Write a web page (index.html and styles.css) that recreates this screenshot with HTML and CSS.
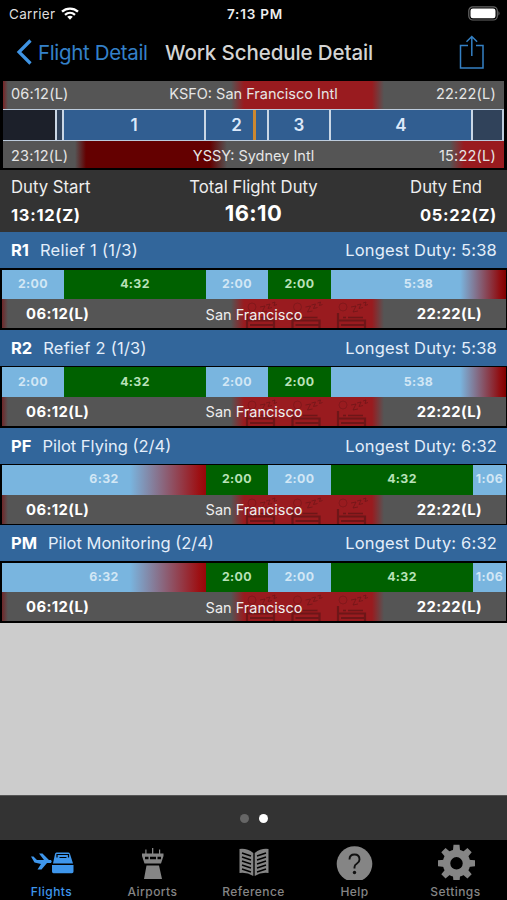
FILE: index.html
```html
<!DOCTYPE html>
<html lang="en">
<head>
<meta charset="utf-8">
<title>Work Schedule Detail</title>
<link rel="stylesheet" href="styles.css">
</head>
<body>
<svg class="defs" width="0" height="0" aria-hidden="true">
  <symbol id="rest" viewBox="0 0 136 29">
    <g id="bed" fill="none" stroke="#5c1416">
      <circle cx="16" cy="8" r="4" stroke-width="1" opacity=".5"/>
      <path d="M11 14V29M11 21.500H38V29M14 26H38" stroke-width="2.200"/>
      <path d="M16 18.500H19M21 18.500H36" stroke-width="1.500"/>
      <path d="M24 8l5-1-3 6 5-1M30 6l4-1-2 4.500 4-1M36 4l3-1-1 3.500 3-1" stroke-width="1" opacity=".75"/>
    </g>
    <use href="#bed" x="45.5"/>
    <use href="#bed" x="91"/>
  </symbol>
</svg>
<main class="screen">
  <header class="top">
    <div class="status">
      <div class="carrier"><span>Carrier</span>
        <svg width="18" height="13" viewBox="0 0 18 13" fill="none" stroke="#fff" stroke-width="2.3"><path d="M1 4.700C5.500.500 12.500.500 17 4.700M4 7.800C7 5.200 11 5.200 14 7.800"/><path d="M6.200 9.800C8 8.500 10 8.500 11.800 9.800L9 12.800Z" fill="#fff" stroke="none"/></svg>
      </div>
      <b class="clock">7:13 PM</b>
      <svg class="battery" width="33" height="15" viewBox="0 0 33 15"><rect x=".8" y=".8" width="28.500" height="13.200" rx="4" fill="none" stroke="#666" stroke-width="1.200"/><rect x="2.500" y="2.500" width="25" height="9.800" rx="2.300" fill="#fff"/><path d="M30.500 5q2 2.400 0 4.800z" fill="#777"/></svg>
    </div>
    <nav class="nav">
      <a class="back"><svg width="17" height="28" viewBox="0 0 17 28"><path d="M15.500 2.500L4 14l11.500 11.500" fill="none" stroke="#3f94e4" stroke-width="3.200"/></svg><span>Flight Detail</span></a>
      <h1>Work Schedule Detail</h1>
      <svg class="share" width="26" height="35" viewBox="0 0 26 35" fill="none" stroke="#3480c4" stroke-width="1.500"><path d="M9 10.500H1.500V33H24V10.500H17M12.800 21V2M7.500 6.800L12.800 1.500l5.300 5.300"/></svg>
    </nav>
  </header>

  <section class="timeline">
    <div class="strip origin"><span class="t-left">06:12(L)</span><span class="airport">KSFO: San Francisco Intl</span><span class="t-right">22:22(L)</span></div>
    <div class="periods"><i class="night"></i><i class="dim"></i><b>1</b><b class="two">2</b><b>3</b><b>4</b><i class="dim"></i></div>
    <div class="strip dest"><span class="t-left">23:12(L)</span><span class="airport">YSSY: Sydney Intl</span><span class="t-right">15:22(L)</span></div>
  </section>

  <section class="summary">
    <div><span>Duty Start</span><b>13:12(Z)</b></div>
    <div class="total"><span>Total Flight Duty</span><b>16:10</b></div>
    <div class="end"><span>Duty End</span><b>05:22(Z)</b></div>
  </section>

  <section class="crew">
    <article>
      <h2><b>R1</b><span class="role relief-role">Relief 1 (1/3)</span><span class="longest">Longest Duty: 5:38</span></h2>
      <div class="bar relief"><i>2:00</i><i class="off">4:32</i><i>2:00</i><i class="off">2:00</i><i class="fade-end">5:38</i></div>
      <div class="place"><svg class="rest"><use href="#rest"/></svg><b>06:12(L)</b><span>San Francisco</span><b>22:22(L)</b></div>
    </article>
    <article>
      <h2><b>R2</b><span class="role relief-role">Refief 2 (1/3)</span><span class="longest">Longest Duty: 5:38</span></h2>
      <div class="bar relief"><i>2:00</i><i class="off">4:32</i><i>2:00</i><i class="off">2:00</i><i class="fade-end">5:38</i></div>
      <div class="place"><svg class="rest"><use href="#rest"/></svg><b>06:12(L)</b><span>San Francisco</span><b>22:22(L)</b></div>
    </article>
    <article>
      <h2><b>PF</b><span class="role">Pilot Flying (2/4)</span><span class="longest">Longest Duty: 6:32</span></h2>
      <div class="bar pilot"><i class="fade">6:32</i><i class="off">2:00</i><i>2:00</i><i class="off">4:32</i><i>1:06</i></div>
      <div class="place"><svg class="rest"><use href="#rest"/></svg><b>06:12(L)</b><span>San Francisco</span><b>22:22(L)</b></div>
    </article>
    <article>
      <h2><b>PM</b><span class="role">Pilot Monitoring (2/4)</span><span class="longest">Longest Duty: 6:32</span></h2>
      <div class="bar pilot"><i class="fade">6:32</i><i class="off">2:00</i><i>2:00</i><i class="off">4:32</i><i>1:06</i></div>
      <div class="place"><svg class="rest"><use href="#rest"/></svg><b>06:12(L)</b><span>San Francisco</span><b>22:22(L)</b></div>
    </article>
  </section>

  <div class="empty"></div>
  <div class="pager"><i></i><i class="on"></i></div>

  <nav class="tabs">
    <a class="active"><svg width="44" height="40" viewBox="0 0 44 40" fill="currentColor"><path d="M1 16.500h2.500L7 20h7l-5-6.500h3.500L19 20h2q1.500 1.500 0 3h-4L11.500 29.500H7.500L11 24l-6.500-1.500z"/><path d="M23 23.500L25 14q.3-1.500 1.500-1.500h12q1.200 0 1.500 1.500l3 9.500zM22 25h21.500v6.500q0 1.700-1.500 1.700H23.500q-1.500 0-1.500-1.700z"/><path d="M27 17.500v-3h11.500v3M29.500 17.500h7" fill="none" stroke="#000" stroke-width="1.200"/></svg><span>Flights</span></a>
    <a><svg width="44" height="40" viewBox="0 0 44 40" fill="currentColor"><path d="M11 13.500h21.500v2.500l-2.500 7.500H13.500L11 16zM15.500 25.500h12.500L31 39H13zM14.300 9.500h1.200V14h-1.200zM21 8h1.300v6H21zM28 9.500h1.200V14H28z"/><path d="M14 18h3.500M19 18h6M26.500 18H30" stroke="#000" stroke-width="2.500"/></svg><span>Airports</span></a>
    <a><svg width="44" height="40" viewBox="0 0 44 40"><path d="M7.500 9Q15 8 21.300 13V36Q15 32 7.500 33zM36.500 9Q29 8 22.700 13V36Q29 32 36.500 33z" fill="currentColor"/><path d="M10 13l9 3M10 17l9 3M10 21l9 3M10 25l9 3M10 29l9 3M34 13l-9 3M34 17l-9 3M34 21l-9 3M34 25l-9 3M34 29l-9 3" stroke="#000" stroke-width="1.500"/></svg><span>Reference</span></a>
    <a><svg width="44" height="40" viewBox="0 0 44 40"><circle cx="21.500" cy="24" r="17.800" fill="currentColor"/><path d="M16.500 19.500Q16.500 14.500 21.500 14.500T26.500 19.500Q26.500 22 24 23.500Q21.500 25 21.500 27V28.500" fill="none" stroke="#111" stroke-width="1.900"/><circle cx="21.500" cy="32.500" r="1.700" fill="#111"/></svg><span>Help</span></a>
    <a><svg width="44" height="40" viewBox="0 0 44 40" fill="currentColor"><g transform="translate(22.500 23.300)"><g id="tooth"><path d="M-3.600-12L-3-18.500H3L3.600-12zM-3.600 12L-3 18.500H3L3.600 12z"/></g><use href="#tooth" transform="rotate(45)"/><use href="#tooth" transform="rotate(90)"/><use href="#tooth" transform="rotate(135)"/><circle r="10" fill="none" stroke="currentColor" stroke-width="7.500"/></g></svg><span>Settings</span></a>
  </nav>
</main>
</body>
</html>
```

FILE: styles.css
```css
* { box-sizing: border-box; }
body { margin: 0; background: #000; font-family: Inter, "Liberation Sans", sans-serif; color: #eee; }
i { font-style: normal; }
.defs { position: absolute; }
.screen { width: 507px; height: 900px; overflow: hidden; display: flex; flex-direction: column; white-space: nowrap; }

.top { height: 81px; flex: none; }
.status { height: 27px; display: grid; grid-template-columns: 1fr auto 1fr; align-items: center; padding: 0 6px 0 9px; font-size: 13.5px; }
.carrier { display: flex; align-items: center; gap: 6px; color: #ddd; letter-spacing: .3px; }
.clock { font-weight: 600; font-size: 13.5px; letter-spacing: .8px; }
.battery { justify-self: end; }
.nav { height: 50px; display: flex; align-items: center; padding: 0 22px 0 15px; }
.back { display: flex; align-items: center; gap: 6px; color: #3480c9; font-size: 20.5px; letter-spacing: -.35px; width: 150px; }
h1 { margin: 0; font-size: 20.5px; font-weight: 500; color: #d4d4d4; letter-spacing: -.1px; flex: 1; }

.timeline { height: 89px; flex: none; padding: 0 3px; display: grid; grid-template-rows: 28px 32px 27px; }
.strip { display: grid; grid-template-columns: 1fr auto 1fr; align-items: center; padding: 0 8px; font-size: 14.5px; color: #e6e6e6; }
.t-left, .t-right { letter-spacing: .22px; }
.t-right { text-align: right; }
.origin { padding-bottom: 3px; background: linear-gradient(90deg, #782426 0, #555 5px, #555 228px, #991b1f 241px, #991b1f 369px, #555 381px); }
.dest { padding-top: 2px; background: linear-gradient(90deg, #555 72px, #640000 83px, #640000 207px, #555 224px, #555 447px, #991b1f 461px); }
.periods { display: grid; grid-template-columns: 54px 7px 142px 63px 62px 142px 1fr; border: solid #bccbdc; border-width: 1px 2px 1px 0; background: #315e91; }
.periods > * { display: flex; align-items: center; justify-content: center; border-right: 2px solid #cad7e5; color: #dce9fa; font-size: 17px; font-weight: 600; }
.periods > :last-child { border: 0; }
.periods .night { background: #1c202a; }
.periods .dim { background: #30425a; }
.periods .two { background: linear-gradient(90deg, transparent 47px, #cc8831 47px, #cc8831 50px, transparent 50px); }

.summary { height: 62px; flex: none; background: #333; display: grid; grid-template-columns: 1fr auto 1fr; padding: 5px 11px 0; font-size: 16.7px; }
.summary div { display: flex; flex-direction: column; }
.summary span { line-height: 25px; }
.summary b { font-size: 16.5px; line-height: 31px; font-weight: 700; color: #fff; letter-spacing: .7px; }
.summary .total { align-items: center; }
.summary .total b { font-size: 22px; line-height: 26px; letter-spacing: .4px; }
.summary .end { align-items: flex-end; }
.end span { margin-right: 14px; }
.end b { margin-right: -1px; }

.crew { flex: none; background: #000; }
article { height: 97.75px; display: grid; grid-template-rows: 37.5px 29.5px 29px; }
h2 { margin: 0; height: 36px; background: #32669b; display: flex; align-items: center; padding: 0 10px 0 11px; font-size: 16.5px; font-weight: 400; color: #e4eefa; }
h2 b { font-weight: 700; color: #fff; margin-right: 11px; }
.relief-role { letter-spacing: .25px; }
.longest { margin-left: auto; letter-spacing: .17px; }
.bar { display: grid; margin: 0 1px 0 2px; }
.relief { grid-template-columns: 62px 142px 62px 63px 1fr; }
.pilot { grid-template-columns: 204px 62px 63px 142px 1fr; }
.bar i { background: #79b5df; display: flex; align-items: center; justify-content: center; font-size: 12.3px; font-weight: 700; letter-spacing: .4px; color: #d2e7f5; padding-bottom: 2px; }
.bar .off { background: #006100; color: #b9e1b9; }
.bar .fade { background: linear-gradient(90deg, #79b5df 128px, #9d1013 197px, #960609); }
.bar .fade-end { background: linear-gradient(90deg, #79b5df 129px, #900d10 169px, #800000); }
.place { position: relative; margin: 0 1px 0 2px; display: grid; grid-template-columns: 1fr auto 1fr; align-items: center; padding: 1px 24px 0; font-size: 14.5px; background: linear-gradient(90deg, #702729 0, #555 6px, #555 229px, #991b1f 242px, #991b1f 370px, #555 382px); }
.place > * { position: relative; }
.place b { font-size: 14.8px; font-weight: 700; color: #fff; letter-spacing: .4px; }
.place b:last-child { text-align: right; }
.place .rest { position: absolute; left: 234px; top: 0; width: 136px; height: 29px; opacity: .7; }

.empty { flex: none; height: 172px; background: #ccc; }
.pager { flex: none; height: 45px; background: #333; border-top: 1px solid #555; display: flex; align-items: center; justify-content: center; gap: 10px; }
.pager i { width: 9px; height: 9px; border-radius: 50%; background: #666; }
.pager .on { background: #fff; }
.tabs { height: 60px; display: grid; grid-template-columns: repeat(5, 101px); justify-content: center; color: #858585; }
.tabs a { display: flex; flex-direction: column; align-items: center; font-size: 12px; letter-spacing: .45px; line-height: 16px; gap: 4px; font-weight: 500; }
.tabs .active { color: #3e96ec; }
```
